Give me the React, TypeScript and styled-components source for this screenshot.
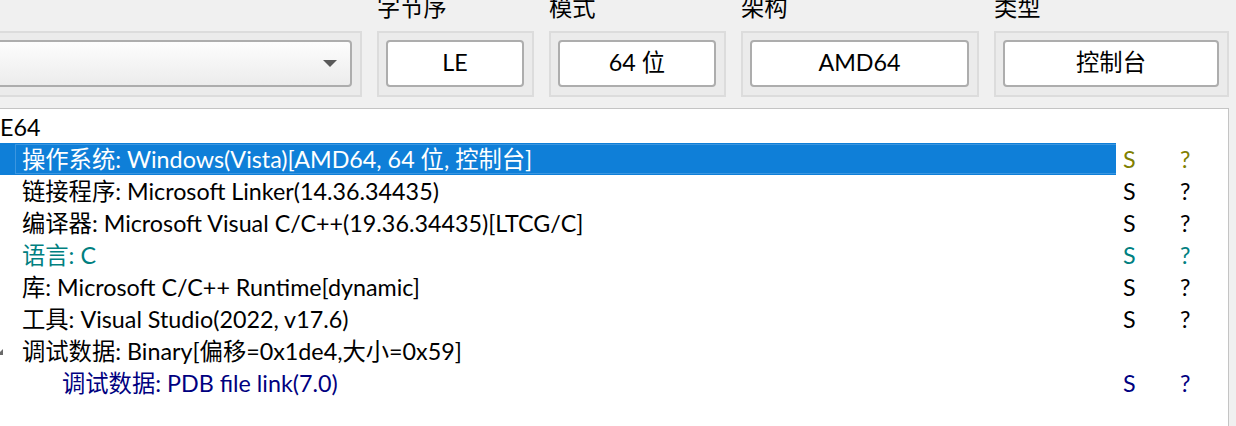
import React from "react";
import styled, { createGlobalStyle } from "styled-components";

const GlobalStyle = createGlobalStyle`
  html, body {
    margin: 0;
    padding: 0;
    background: #f0f0f0;
    overflow: hidden;
  }
  body {
    font-family: Lato, "Noto Sans CJK SC", sans-serif;
    font-size: 23.3px;
    color: #000;
  }
`;

const Root = styled.div`
  box-sizing: border-box;
  width: 1296px;
  margin-left: -60px;
  padding-right: 7px;
  display: flex;
  flex-direction: column;
`;

const Toolbar = styled.div`
  display: flex;
  gap: 15px;
  margin-top: -9px;
`;

const Field = styled.div<{ $w?: number }>`
  display: flex;
  flex-direction: column;
  ${(p) => (p.$w ? `width: ${p.$w}px; flex: none;` : `flex: 1;`)}
`;

const Label = styled.div`
  height: 32px;
  line-height: 32px;
  margin-bottom: 8px;
  white-space: nowrap;
`;

const Frame = styled.div`
  box-sizing: border-box;
  height: 66px;
  border: 2px solid #dcdcdc;
  background: #ebebeb;
  padding: 7px 8px 8px 7px;
  display: flex;
`;

const Combo = styled.div`
  box-sizing: border-box;
  flex: 1;
  height: 47px;
  border: 2px solid #adadad;
  border-radius: 4px;
  background: linear-gradient(#fdfdfd, #ececec);
  display: flex;
  align-items: center;
  justify-content: flex-end;
  padding-right: 13px;
`;

const ValueBox = styled.div`
  box-sizing: border-box;
  flex: 1;
  height: 47px;
  border: 2px solid #adadad;
  border-radius: 4px;
  background: #fff;
  display: flex;
  align-items: center;
  justify-content: center;
  line-height: 1;
  padding-bottom: 2px;
  white-space: nowrap;
`;

const Tree = styled.div`
  margin-top: 11px;
  height: 340px;
  background: #fff;
  border: 1px solid #c4c4c4;
  padding-top: 2px;
`;

const Row = styled.div`
  display: grid;
  grid-template-columns: 1fr 57px 55px;
  height: 32px;
  line-height: 32px;
`;

const MainCell = styled.div<{ $indent: number; $selected?: boolean }>`
  display: flex;
  padding-left: ${(p) => p.$indent}px;
  background: ${(p) => (p.$selected ? "#0f7fd8" : "transparent")};
  overflow: hidden;
`;

const Branch = styled.div`
  width: 20px;
  flex: none;
  display: flex;
`;

const Item = styled.div<{ $selected?: boolean; $color: string }>`
  box-sizing: border-box;
  flex: 1;
  padding-left: 7px;
  white-space: nowrap;
  color: ${(p) => (p.$selected ? "#ffffff" : p.$color)};
  ${(p) =>
    p.$selected
      ? `border: 1px solid #3b96e0; border-right: none; line-height: 28px; margin: 1px 0; padding-left: 6px;`
      : ``}
`;

const InfoCell = styled.div<{ $color: string }>`
  padding-left: 7px;
  color: ${(p) => p.$color};
`;

type Node = {
  level: number;
  text: string;
  color: string;
  flag?: boolean;
  selected?: boolean;
  expander?: boolean;
};

const rows: Node[] = [
  { level: 0, text: "PE64", color: "#000" },
  {
    level: 1,
    text: "操作系统: Windows(Vista)[AMD64, 64 位, 控制台]",
    color: "#808000",
    flag: true,
    selected: true,
  },
  { level: 1, text: "链接程序: Microsoft Linker(14.36.34435)", color: "#000", flag: true },
  {
    level: 1,
    text: "编译器: Microsoft Visual C/C++(19.36.34435)[LTCG/C]",
    color: "#000",
    flag: true,
  },
  { level: 1, text: "语言: C", color: "#008080", flag: true },
  { level: 1, text: "库: Microsoft C/C++ Runtime[dynamic]", color: "#000", flag: true },
  { level: 1, text: "工具: Visual Studio(2022, v17.6)", color: "#000", flag: true },
  {
    level: 1,
    text: "调试数据: Binary[偏移=0x1de4,大小=0x59]",
    color: "#000",
    expander: true,
  },
  { level: 2, text: "调试数据: PDB file link(7.0)", color: "#000080", flag: true },
];

const indentFor = (level: number) => (level === 0 ? 38 : level === 1 ? 54 : 94);

const fields = [
  { label: "字节序", value: "LE", w: 157 },
  { label: "模式", value: "64 位", w: 177 },
  { label: "架构", value: "AMD64", w: 238 },
  { label: "类型", value: "控制台", w: 235 },
];

export default function App() {
  return (
    <>
      <GlobalStyle />
      <Root>
        <Toolbar>
          <Field>
            <Label />
            <Frame>
              <Combo>
                <svg width="14" height="8" viewBox="0 0 14 8">
                  <polygon points="0,0 14,0 7,7" fill="#5a5a5a" />
                </svg>
              </Combo>
            </Frame>
          </Field>
          {fields.map((f) => (
            <Field key={f.label} $w={f.w}>
              <Label>{f.label}</Label>
              <Frame>
                <ValueBox>{f.value}</ValueBox>
              </Frame>
            </Field>
          ))}
        </Toolbar>
        <Tree>
          {rows.map((r, i) => (
            <Row key={i}>
              <MainCell $indent={indentFor(r.level)} $selected={r.selected}>
                {r.level > 0 && (
                  <Branch>
                    {r.expander && (
                      <svg width="20" height="32" viewBox="0 0 20 32">
                        <polygon points="8,14 8,20 2,20" fill="#6a6a6a" />
                      </svg>
                    )}
                  </Branch>
                )}
                <Item $selected={r.selected} $color={r.color}>
                  {r.text}
                </Item>
              </MainCell>
              <InfoCell $color={r.color}>{r.flag ? "S" : ""}</InfoCell>
              <InfoCell $color={r.color}>{r.flag ? "?" : ""}</InfoCell>
            </Row>
          ))}
        </Tree>
      </Root>
    </>
  );
}
